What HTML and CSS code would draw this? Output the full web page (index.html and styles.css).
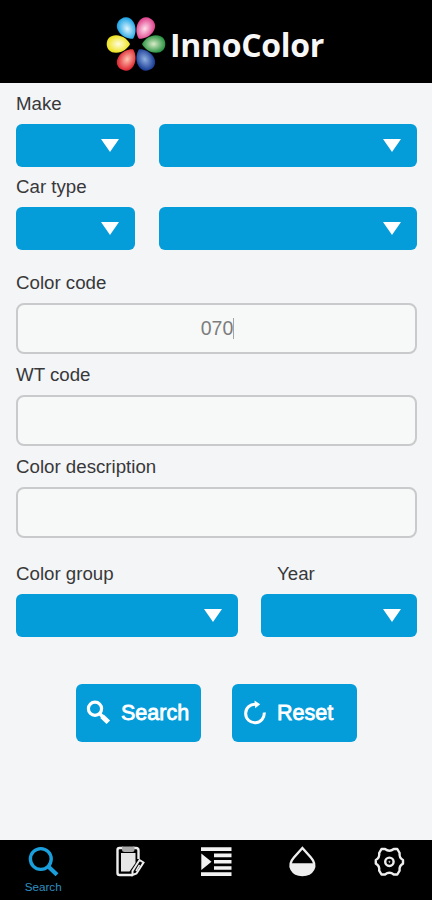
FILE: index.html
```html
<!DOCTYPE html>
<html lang="en">
<head>
    <meta charset="UTF-8">
    <meta name="viewport" content="width=device-width, initial-scale=1.0">
    <title>InnoColor</title>
    <link rel="stylesheet" href="styles.css">
</head>
<body>
    <header class="header">
        <svg class="logo" width="60" height="60" viewBox="-30 -30 60 60">
            <defs>
                <path id="petal" d="M6 0 C7.5 -3.5 13 -8.8 20 -8.8 C26 -8.8 29.3 -5 29.3 0 C29.3 5 26 8.8 20 8.8 C13 8.8 7.5 3.5 6 0 Z"/>
                <radialGradient id="green"><stop offset="0" stop-color="#d9ecc8"/><stop offset="1" stop-color="#2b9444"/></radialGradient>
                <radialGradient id="blue"><stop offset="0" stop-color="#8fb0e0"/><stop offset="1" stop-color="#1d3f98"/></radialGradient>
                <radialGradient id="red"><stop offset="0" stop-color="#ffc4b0"/><stop offset="1" stop-color="#e02a35"/></radialGradient>
                <radialGradient id="yellow"><stop offset="0" stop-color="#fffde0"/><stop offset="1" stop-color="#eee21e"/></radialGradient>
                <radialGradient id="cyan"><stop offset="0" stop-color="#e0f6ff"/><stop offset="1" stop-color="#20a4e4"/></radialGradient>
                <radialGradient id="pink"><stop offset="0" stop-color="#ffe0ec"/><stop offset="1" stop-color="#e0458f"/></radialGradient>
            </defs>
            <use href="#petal" fill="url(#green)"/>
            <use href="#petal" fill="url(#blue)" transform="rotate(60)"/>
            <use href="#petal" fill="url(#red)" transform="rotate(120)"/>
            <use href="#petal" fill="url(#yellow)" transform="rotate(180)"/>
            <use href="#petal" fill="url(#cyan)" transform="rotate(240)"/>
            <use href="#petal" fill="url(#pink)" transform="rotate(300)"/>
        </svg>
        <span class="brand">InnoColor</span>
    </header>

    <main class="content">
        <div class="label">Make</div>
        <div class="row">
            <div class="select short"></div>
            <div class="select"></div>
        </div>

        <div class="label label-car">Car type</div>
        <div class="row">
            <div class="select short"></div>
            <div class="select"></div>
        </div>

        <div class="label label-code">Color code</div>
        <div class="input">070<span class="caret"></span></div>

        <div class="label label-next">WT code</div>
        <div class="input"></div>

        <div class="label label-next">Color description</div>
        <div class="input"></div>

        <div class="row group-row">
            <div class="group">
                <div class="label">Color group</div>
                <div class="select"></div>
            </div>
            <div class="year">
                <div class="label">Year</div>
                <div class="select"></div>
            </div>
        </div>

        <div class="actions">
            <div class="button">
                <svg width="28" height="28" viewBox="0 0 28 28" fill="none" stroke="#fff">
                    <circle cx="10" cy="9.8" r="6.6" stroke-width="3.2"/>
                    <path d="M14.5 14.5 L18 18" stroke-width="3.4"/>
                    <path d="M17 17.2 L23.3 23.3" stroke-width="5" stroke-linecap="butt"/>
                </svg>
                <span>Search</span>
            </div>
            <div class="button">
                <svg width="28" height="28" viewBox="0 0 28 28">
                    <path d="M14.5 5.2 A9.3 9.3 0 1 0 23.2 13.5" fill="none" stroke="#fff" stroke-width="3"/>
                    <path d="M13.5 1.5 L19.2 5.2 L14.2 9.2 Z" fill="#fff"/>
                </svg>
                <span>Reset</span>
            </div>
        </div>
    </main>

    <nav class="tabs">
        <div class="tab active">
            <svg width="36" height="36" viewBox="0 0 36 36" fill="none" stroke="#1a9fdc">
                <circle cx="15.8" cy="15" r="10.4" stroke-width="3.4"/>
                <path d="M23 22.3 L32 30.7" stroke-width="4.2"/>
            </svg>
            <span>Search</span>
        </div>
        <div class="tab">
            <svg width="36" height="36" viewBox="0 0 36 36">
                <path d="M11 4 H7.5 Q5.5 4 5.5 6 V29 Q5.5 31 7.5 31 H21" fill="none" stroke="#eee" stroke-width="2.4"/>
                <path d="M21 4 H24 Q26.5 4 26.5 6.5 V15" fill="none" stroke="#eee" stroke-width="2.4"/>
                <path d="M10 2.5 H22.5 V5.5 Q22.5 8 20 8 H12.5 Q10 8 10 5.5 Z" fill="#aaa"/>
                <path d="M9 9 H23.5 V19 L17.5 27.5 H9 Z" fill="#e6e6e6"/>
                <path d="M27.5 16 L31.5 18.5 L24.5 29.5 L20.5 31 V27 Z" fill="#000" stroke="#eee" stroke-width="2"/>
                <path d="M27.5 21 L24 27" stroke="#eee" stroke-width="1.5"/>
            </svg>
        </div>
        <div class="tab">
            <svg width="36" height="36" viewBox="0 0 36 36" fill="#f2f2f2">
                <path d="M3 3.3 H33.5 V7 H3 Z M16 9.6 H33.5 V13.2 H16 Z M16 16 H33.5 V19.6 H16 Z M16 22.2 H33.5 V25.8 H16 Z M3 28.3 H33.5 V32 H3 Z"/>
                <path d="M3.3 9.5 L13.5 17.8 L3.3 26 Z"/>
            </svg>
        </div>
        <div class="tab">
            <svg width="36" height="36" viewBox="0 0 36 36">
                <path d="M18.4 4 L26.9 13.5 C34.4 22 28.4 31 18.4 31 C8.4 31 2.4 22 9.9 13.5 Z" fill="none" stroke="#eee" stroke-width="2.4"/>
                <path d="M5.9 19.3 H30.9 C31.4 27 25.4 31.5 18.4 31.5 C11.4 31.5 5.4 27 5.9 19.3 Z" fill="#eee"/>
            </svg>
        </div>
        <div class="tab">
            <svg width="36" height="36" viewBox="0 0 36 36" fill="none" stroke="#eee" stroke-width="2.4" stroke-linejoin="round">
                <path d="M10.5 5 H14 Q18.4 8.6 22.8 5 H26.3 L28.6 9 Q28 14 32 16 V19.6 Q28 21.6 28.6 26.6 L26.3 30.5 H22.8 Q18.4 27 14 30.5 H10.5 L8.2 26.6 Q8.8 21.6 4.8 19.6 V16 Q8.8 14 8.2 9 Z"/>
                <circle cx="18.4" cy="17.8" r="4.2"/>
                <circle cx="18.4" cy="17.8" r="0.5" stroke-width="1"/>
            </svg>
        </div>
    </nav>
</body>
</html>
```
FILE: styles.css
```css
* {
    box-sizing: border-box;
}

body {
    margin: 0;
    height: 900px;
    display: flex;
    flex-direction: column;
    overflow: hidden;
    background-color: #f3f5f7;
    font-family: "Liberation Sans", Arial, sans-serif;
    color: #38383a;
}

/* Header */
.header {
    height: 83px;
    display: flex;
    align-items: center;
    padding: 4px 0 0 106px;
    background-color: #000;
}

.brand {
    margin-left: 4px;
    padding-top: 2px;
    color: #f7f7f7;
    font-family: "Open Sans", "Noto Sans", sans-serif;
    font-size: 32px;
    font-weight: bold;
    letter-spacing: -0.3px;
    line-height: 40px;
}

/* Form */
.content {
    flex: 1;
    padding: 10px 15px 0 16px;
}

.label {
    height: 22px;
    margin-bottom: 9px;
    font-size: 18.7px;
    line-height: 22px;
    white-space: nowrap;
}

.label-car {
    margin-top: 9px;
}

.label-code {
    margin-top: 22px;
}

.label-next {
    margin-top: 10px;
}

.row {
    display: flex;
    gap: 24px;
}

.select {
    flex: 1;
    height: 43px;
    display: flex;
    justify-content: flex-end;
    padding: 15px 16px 0 0;
    background-color: #059cda;
    border-radius: 6px;
}

.select.short {
    flex: none;
    width: 119px;
}

.select::after {
    content: "";
    width: 18px;
    height: 13px;
    background-color: #fff;
    clip-path: polygon(0 0, 100% 0, 50% 100%);
}

.input {
    height: 51px;
    display: flex;
    align-items: center;
    justify-content: center;
    padding-left: 2px;
    border: 2px solid #c9cacb;
    border-radius: 8px;
    background-color: #f7f8f8;
    color: #7d7d7d;
    font-size: 19.5px;
}

.caret {
    width: 1px;
    height: 21px;
    background-color: #a5a5a5;
}

.group-row {
    margin-top: 25px;
    gap: 23px;
}

.group {
    width: 222px;
}

/* keeps the row select at its own height inside the column */
.group .select,
.year .select {
    height: 43px;
}

.year {
    flex: 1;
}

.year .label {
    padding-left: 16px;
}

/* Buttons */
.actions {
    display: flex;
    gap: 31px;
    margin: 47px 0 0 60px;
}

.button {
    width: 125px;
    height: 58px;
    display: flex;
    align-items: center;
    gap: 8px;
    padding-left: 9px;
    background-color: #059cda;
    border-radius: 6px;
    color: #fff;
    font-size: 21.5px;
    -webkit-text-stroke: 0.8px #fff;
}

.button svg {
    flex: none;
}

/* Bottom tabs */
.tabs {
    height: 60px;
    display: flex;
    background-color: #000;
}

.tab {
    flex: 1;
    display: flex;
    flex-direction: column;
    align-items: center;
    padding-top: 4px;
    font-size: 11.7px;
    line-height: 14px;
}

.tab.active {
    color: #2f8fc0;
}
```
